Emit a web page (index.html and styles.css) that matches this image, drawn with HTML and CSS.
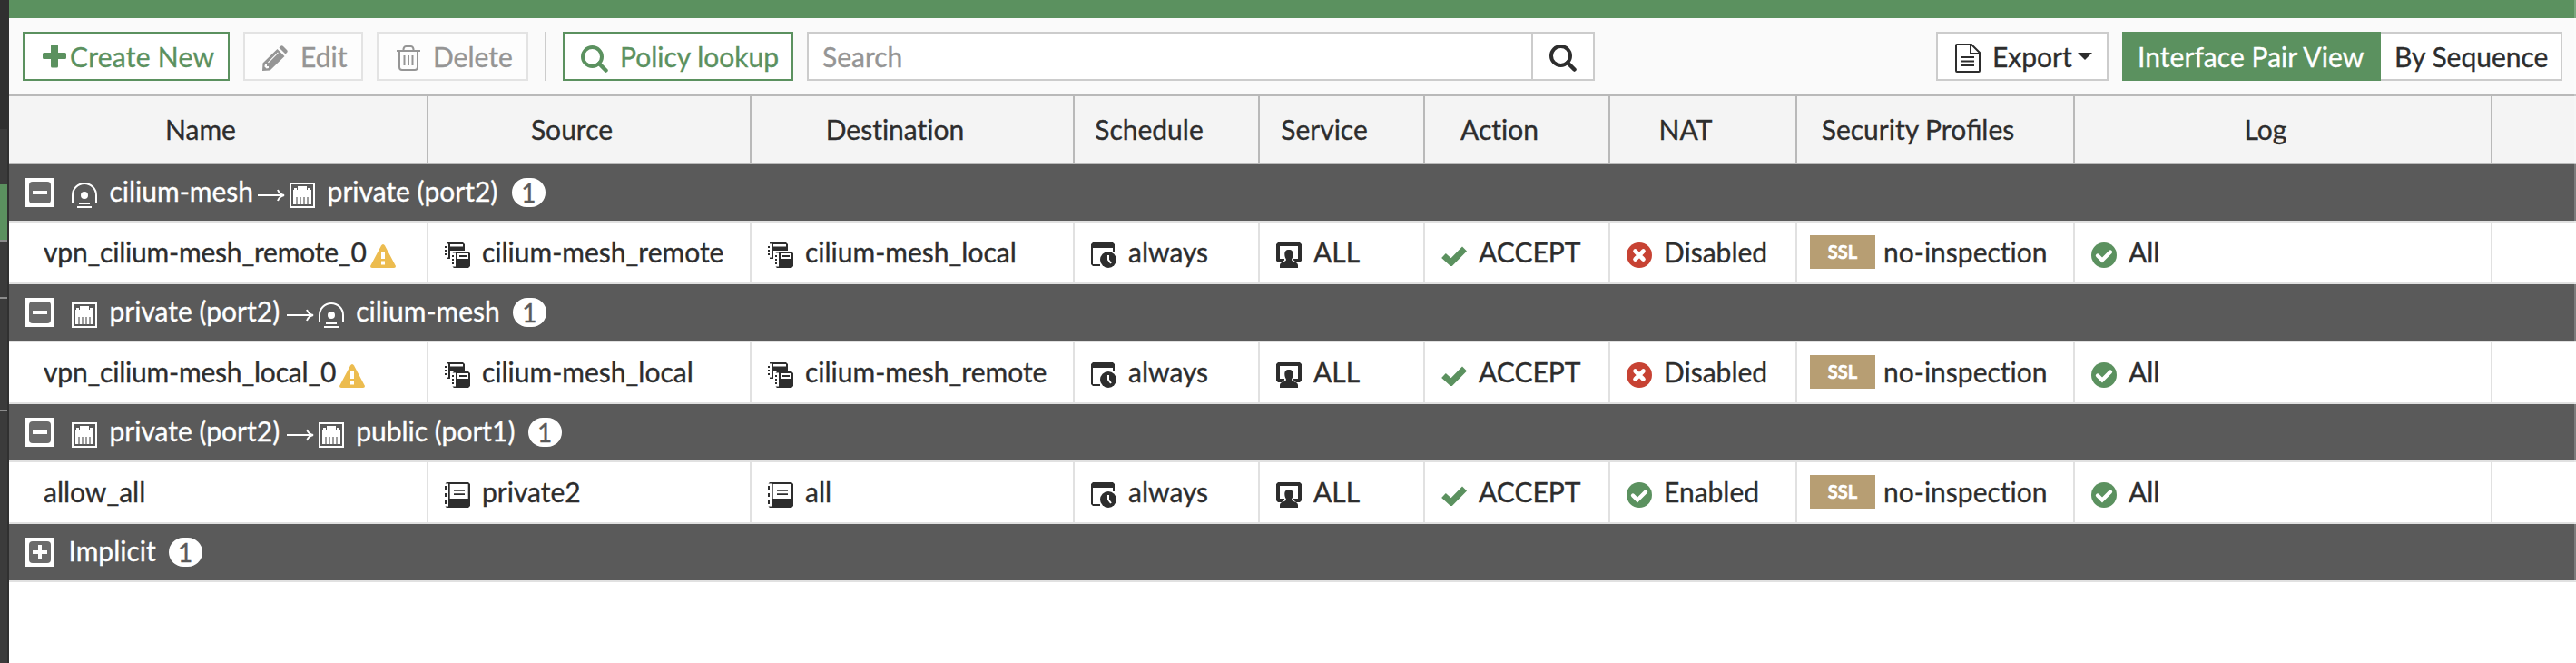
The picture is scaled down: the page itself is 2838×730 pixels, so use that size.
FILE: index.html
```html
<!DOCTYPE html>
<html lang="en">
<head>
<meta charset="utf-8">
<title>Firewall Policy</title>
<link rel="stylesheet" href="styles.css">
</head>
<body>
<svg class="defs" aria-hidden="true">
  <symbol id="i-tunnel" viewBox="0 0 28 28"><path d="M1 22V14A13 13 0 0 1 27 14V22" fill="none" stroke="currentColor" stroke-width="2"/><circle cx="14" cy="14" r="4" fill="currentColor"/><path d="M8 22h12v2H8zM6 26h16v2H6z" fill="currentColor"/></symbol>
  <symbol id="i-port" viewBox="0 0 28 28"><path d="M1 1h26v26H1z" fill="none" stroke="currentColor" stroke-width="2"/><path fill="currentColor" d="M4 24V8h1V6h3v2h1V4h10v4h1V6h3v2h1v16h-3.400v-8h-1.200v8h-2.800v-8h-1.200v8h-2.800v-8h-1.200v8H8.600v-8H7.400v8z"/></symbol>
  <symbol id="i-arrow" viewBox="0 0 30 16"><path d="M0 8h28M22 2q2 5 7 6q-5 1-7 6" fill="none" stroke="currentColor" stroke-width="2"/></symbol>
  <symbol id="i-group" viewBox="0 0 28 28"><path fill="currentColor" fill-rule="evenodd" d="M2 0h18l2 2v7H6v9H2v-1.500h2V1.500H2zM6 2v2.500h14V2zM0 4h2v2H0zM0 8h2v2H0zM0 12h2v2H0zM10 10h16l2 2v14l-2 2H10l-1.500-1.500H12v-15H8.500zM14 12v6h12v-6zM16 14h8v2h-8zM8 14h2v2H8zM8 18h2v2H8zM8 22h2v2H8z"/></symbol>
  <symbol id="i-addr" viewBox="0 0 28 28"><path fill="currentColor" fill-rule="evenodd" d="M2 0h24l2 2v24l-2 2H2l-1.500-1.500H4v-25H.5zM5.700 2v16h20V2zM10 8h12v1.700H10zM10 12.300h12V14H10zM0 4h2v4H0zM0 12h2v4H0zM0 20h2v4H0z"/></symbol>
  <symbol id="i-sched" viewBox="0 0 28 28"><path fill="currentColor" d="M2 0h22l2 2v8h-2V6H2v18h8v2H2l-2-2V2z"/><circle cx="19" cy="19" r="9" fill="currentColor"/><path d="M19 14v5l3 4" fill="none" stroke="#fff" stroke-width="2"/></symbol>
  <symbol id="i-service" viewBox="0 0 28 28"><path fill="currentColor" d="M2 0h24l2 2v18l-2 2h-4l-3-2.500v-1.500h5V4H4v14h5v1.500L6 22H2l-2-2V2zM14 8c3.500 0 4.700 2 4.700 5 0 3-1.200 4-1.700 6 0 2.500 7 2 7 6v3H4v-3c0-4 7-3.500 7-6-.5-2-1.700-3-1.700-6 0-3 1.200-5 4.700-5z"/></symbol>
  <symbol id="i-check" viewBox="0 0 28 22"><path d="M2.500 10.500l8.300 7.500L25.500 3" fill="none" stroke="currentColor" stroke-width="7"/></symbol>
  <symbol id="i-ok" viewBox="0 0 28 28"><circle cx="14" cy="14" r="14" fill="currentColor"/><path d="M7 14.500l5 5L21 10.500" fill="none" stroke="#fff" stroke-width="4.300" stroke-linecap="round"/></symbol>
  <symbol id="i-no" viewBox="0 0 28 28"><circle cx="14" cy="14" r="14" fill="currentColor"/><path d="M9.500 9.500l9 9M18.500 9.500l-9 9" fill="none" stroke="#fff" stroke-width="4.600" stroke-linecap="round"/></symbol>
  <symbol id="i-warn" viewBox="0 0 28 26"><path d="M14 0q1.200 0 2 1.500L28 24q0 2-2 2H2q-2 0-2-2L12 1.500Q12.800 0 14 0z" fill="currentColor"/><path d="M12 8h4v8h-4zM12 18.500h4v4h-4z" fill="#fff"/></symbol>
  <symbol id="i-search" viewBox="0 0 30 30"><circle cx="12.500" cy="12.500" r="10.500" fill="none" stroke="currentColor" stroke-width="4"/><path d="M20 20l7.500 7.500" stroke="currentColor" stroke-width="4.500" stroke-linecap="round"/></symbol>
</svg>
<div class="app">
  <aside class="side"><i class="s-top"></i><i class="s-a"></i><i class="s-on"></i><i class="s-b"></i><i class="s-c"></i><i class="s-d"></i></aside>
  <main class="main">
    <div class="strip"></div>
    <div class="toolbar">
      <button class="btn green create"><svg class="plus" viewBox="0 0 26 26"><path fill="currentColor" d="M9 1.500Q9 0 10.500 0h5Q17 0 17 1.500V9h7.500Q26 9 26 10.500v4q0 1.500-1.500 1.500H17v8q0 1.500-1.500 1.500h-5Q9 25.500 9 24v-8H1.500Q0 16 0 14.500v-4Q0 9 1.500 9H9z"/></svg>Create New</button>
      <button class="btn off edit"><svg viewBox="0 0 28 28"><path fill="currentColor" fill-rule="evenodd" d="M0 28l.5-8.500L16.500 4l8 8L8.500 27.500zM3 21l-.7 2.300 2.300 2.300L7 25v-2H5v-2zM6 18.500l11-11 .8.8-11 11zM18.500 2.500L20 1q1.500-1.500 3 0l4 4q1.500 1.500 0 3l-1.500 1.500z"/></svg>Edit</button>
      <button class="btn off delete"><svg viewBox="0 0 26 28"><path d="M0 6h26M7.500 6V4q.5-3 3-3h5q2.500 0 3 3v2M3 6v18q0 3 3 3h14q3 0 3-3V6M8.500 11v11M13 11v11M17.500 11v11" fill="none" stroke="currentColor" stroke-width="2"/></svg>Delete</button>
      <span class="sep"></span>
      <button class="btn green lookup"><svg><use href="#i-search"/></svg>Policy lookup</button>
      <div class="search"><span class="field">Search</span><span class="go"><svg><use href="#i-search"/></svg></span></div>
      <button class="btn export"><svg viewBox="0 0 28 32"><path d="M2 1h16l9 9v20q0 1-1 1H2q-1 0-1-1V2q0-1 1-1zM17 1v10h10M7 15h14M7 19.500h14M7 24h14" fill="none" stroke="currentColor" stroke-width="2"/></svg>Export<i class="caret"></i></button>
      <div class="views"><span class="view on">Interface Pair View</span><span class="view">By Sequence</span></div>
    </div>
    <div class="grid head"><span>Name</span><span>Source</span><span>Destination</span><span>Schedule</span><span>Service</span><span>Action</span><span>NAT</span><span><span>Security Pro<span class="lig">fi</span>les</span></span><span>Log</span><span></span></div>

    <div class="group first"><i class="toggle"></i><svg class="ic"><use href="#i-tunnel"/></svg><b>cilium-mesh</b><svg class="arrow"><use href="#i-arrow"/></svg><svg class="ic"><use href="#i-port"/></svg><b>private (port2)</b><em>1</em></div>
    <div class="grid row">
      <span class="name">vpn_cilium-mesh_remote_0<svg class="warn"><use href="#i-warn"/></svg></span>
      <span><svg class="ic"><use href="#i-group"/></svg>cilium-mesh_remote</span>
      <span><svg class="ic"><use href="#i-group"/></svg>cilium-mesh_local</span>
      <span><svg class="ic"><use href="#i-sched"/></svg>always</span>
      <span><svg class="ic"><use href="#i-service"/></svg>ALL</span>
      <span><svg class="check"><use href="#i-check"/></svg>ACCEPT</span>
      <span><svg class="ic no"><use href="#i-no"/></svg>Disabled</span>
      <span class="sec"><i class="ssl">SSL</i>no-inspection</span>
      <span><svg class="ic ok"><use href="#i-ok"/></svg>All</span><span></span>
    </div>

    <div class="group"><i class="toggle"></i><svg class="ic"><use href="#i-port"/></svg><b>private (port2)</b><svg class="arrow"><use href="#i-arrow"/></svg><svg class="ic"><use href="#i-tunnel"/></svg><b>cilium-mesh</b><em>1</em></div>
    <div class="grid row">
      <span class="name">vpn_cilium-mesh_local_0<svg class="warn"><use href="#i-warn"/></svg></span>
      <span><svg class="ic"><use href="#i-group"/></svg>cilium-mesh_local</span>
      <span><svg class="ic"><use href="#i-group"/></svg>cilium-mesh_remote</span>
      <span><svg class="ic"><use href="#i-sched"/></svg>always</span>
      <span><svg class="ic"><use href="#i-service"/></svg>ALL</span>
      <span><svg class="check"><use href="#i-check"/></svg>ACCEPT</span>
      <span><svg class="ic no"><use href="#i-no"/></svg>Disabled</span>
      <span class="sec"><i class="ssl">SSL</i>no-inspection</span>
      <span><svg class="ic ok"><use href="#i-ok"/></svg>All</span><span></span>
    </div>

    <div class="group"><i class="toggle"></i><svg class="ic"><use href="#i-port"/></svg><b>private (port2)</b><svg class="arrow"><use href="#i-arrow"/></svg><svg class="ic"><use href="#i-port"/></svg><b>public (port1)</b><em>1</em></div>
    <div class="grid row">
      <span class="name plain">allow_all</span>
      <span><svg class="ic"><use href="#i-addr"/></svg>private2</span>
      <span><svg class="ic"><use href="#i-addr"/></svg>all</span>
      <span><svg class="ic"><use href="#i-sched"/></svg>always</span>
      <span><svg class="ic"><use href="#i-service"/></svg>ALL</span>
      <span><svg class="check"><use href="#i-check"/></svg>ACCEPT</span>
      <span><svg class="ic ok"><use href="#i-ok"/></svg>Enabled</span>
      <span class="sec"><i class="ssl">SSL</i>no-inspection</span>
      <span><svg class="ic ok"><use href="#i-ok"/></svg>All</span><span></span>
    </div>

    <div class="group implicit"><i class="toggle closed"></i><b>Implicit</b><em>1</em></div>
  </main>
  <div class="edge"></div>
</div>
</body>
</html>
```
FILE: styles.css
```css
* { box-sizing: border-box; }
body { margin: 0; background: #fff; color: #2d2d2d; font: 30px/40px Lato, "Open Sans", sans-serif; font-variant-ligatures: none; -webkit-text-stroke: 0.35px currentColor; overflow: hidden; }
.defs { position: absolute; width: 0; height: 0; }
.app { display: flex; width: 2838px; height: 730px; position: relative; }
i, em { font-style: normal; }
b { font-weight: 400; }
svg { flex: none; }
.lig { font-variant-ligatures: common-ligatures; }

.side { width: 10px; flex: none; display: flex; flex-direction: column; background: #3b3b3b; border-right: 2px solid #303030; }
.side i { display: block; flex: none; }
.s-top { height: 142px; background: #303030; }
.s-a { height: 61px; }
.s-on { height: 61px; background: #5b915f; }
.s-b { height: 65px; border-top: 2px solid #8c8c8c; border-bottom: 2px solid #8c8c8c; }
.s-c { height: 122px; }
.s-d { height: 2px; background: #8c8c8c; }

.main { flex: 1; min-width: 0; }
.strip { height: 20px; background: #5b915f; }
.edge { position: absolute; right: 0; top: 0; width: 2px; height: 640px; background: rgba(255,255,255,.2); }

.toolbar { height: 84px; display: flex; align-items: center; padding: 0 15px; background: #fafafa; }
.btn { font: inherit; font-variant-ligatures: none; color: inherit; height: 54px; margin: 0; padding: 0; border: 2px solid #ccc; background: #fff; display: flex; align-items: center; justify-content: flex-start; white-space: nowrap; flex: none; }
.green { color: #5b915f; border-color: #5b915f; }
.off { color: #959595; border-color: #e3e3e3; background: #fdfdfd; }
.create { width: 228px; padding-left: 20px; letter-spacing: .25px; }
.create svg { width: 26px; height: 26px; margin-right: 4px; }
.edit { width: 132px; margin-left: 15px; padding-left: 19px; }
.edit svg { width: 28px; height: 28px; margin: 3px 14px 0 0; }
.delete { width: 167px; margin-left: 15px; padding-left: 20px; }
.delete svg { width: 26px; height: 28px; margin: 3px 14px 0 0; }
.sep { width: 2px; height: 54px; margin: 0 18px; background: #ccc; flex: none; }
.lookup { width: 254px; padding-left: 18px; }
.lookup svg { width: 30px; height: 30px; margin: 6px 13px 0 0; }
.search { width: 868px; height: 54px; margin-left: 15px; display: flex; border: 2px solid #ccc; background: #fff; color: #959595; }
.field { flex: 1; padding: 5px 0 0 15px; }
.go { width: 68px; border-left: 2px solid #ccc; color: #2d2d2d; }
.go svg { width: 30px; height: 30px; margin: 12px 0 0 18px; display: block; }
.export { width: 190px; margin-left: auto; padding-left: 19px; }
.export svg { width: 28px; height: 32px; margin: 4px 13px 0 0; }
.caret { border: 8px solid transparent; border-top-color: #2d2d2d; border-bottom: 0; margin: 0 0 0 6px; }
.views { display: flex; margin-left: 15px; }
.view { width: 200px; height: 54px; padding: 5px 0 0 15px; border: 2px solid #ccc; border-left: 0; background: #fff; white-space: nowrap; }
.view.on { width: 285px; padding: 7px 0 0 17px; border: 0; background: #5b915f; color: #fff; letter-spacing: .05px; }

.grid { display: grid; grid-template-columns: 462px 356px 356px 204px 182px 204px 206px 306px 460px 1fr; }
.grid > span { display: flex; align-items: center; white-space: nowrap; min-width: 0; }
.grid > span:not(:last-child) { border-right: 2px solid #e1e1e1; }
.head { height: 77px; background: #f4f4f4; border: solid #b9b9b9; border-width: 2px 0; }
.grid.head > span { justify-content: center; padding: 0 38px 1px 0; }
.grid.head > span:not(:last-child) { border-right-color: #b9b9b9; }

.group { height: 62px; padding: 0 0 0 18px; display: flex; align-items: center; background: #5a5a5a; color: #fff; }
.group b { margin: -4px 0 0 13.5px; }
.toggle { display: block; width: 32px; height: 32px; margin-right: 19px; padding: 4px; background: #fff; }
.toggle::before { content: ""; display: block; height: 24px; border-radius: 4px; background: linear-gradient(#fff, #fff) center / 16px 4px no-repeat, #6b6b6b; }
.closed { margin-right: 0; }
.closed::before { background: linear-gradient(#fff, #fff) center / 16px 4px no-repeat, linear-gradient(#fff, #fff) center / 4px 16px no-repeat, #6b6b6b; }
.ic { width: 28px; height: 28px; margin-top: 6px; }
.arrow { width: 30px; height: 16px; margin: 6px 5px 0 7.5px; }
.first .arrow { margin-left: 5px; }
.group em { width: 37px; height: 32px; margin-left: 14px; border-radius: 16px; background: #fff; color: #5a5a5a; text-align: center; line-height: 32px; font-size: 28px; }
.first em { margin-left: 15.5px; }
.group.implicit b { margin-left: 15.5px; }

.row { height: 70px; border: solid #e1e1e1; border-width: 2px 0; }
.grid.row > span { padding: 0 0 2px 18px; }
.grid.row > .name { padding-left: 38px; letter-spacing: -.2px; }
.grid.row > .plain { letter-spacing: 0; }
.row .ic, .row .check { margin: 8px 13px 0 0; }
.row .check { width: 28px; height: 22px; margin-top: 10px; color: #5b915f; }
.ok { color: #5b915f; }
.no { color: #c74233; }
.warn { width: 28px; height: 26px; margin: 9px 0 0 4px; color: #ecbc4f; }
.grid.row > .sec { padding-left: 14px; }
.ssl { width: 72px; height: 37px; margin: 0 9px 0 0; background: #b79e73; color: #fff; font-weight: 700; font-size: 20px; line-height: 36px; text-align: center; -webkit-text-stroke: .6px #fff; }
.group.implicit { height: 64px; border-bottom: 2px solid #e1e1e1; }
```
